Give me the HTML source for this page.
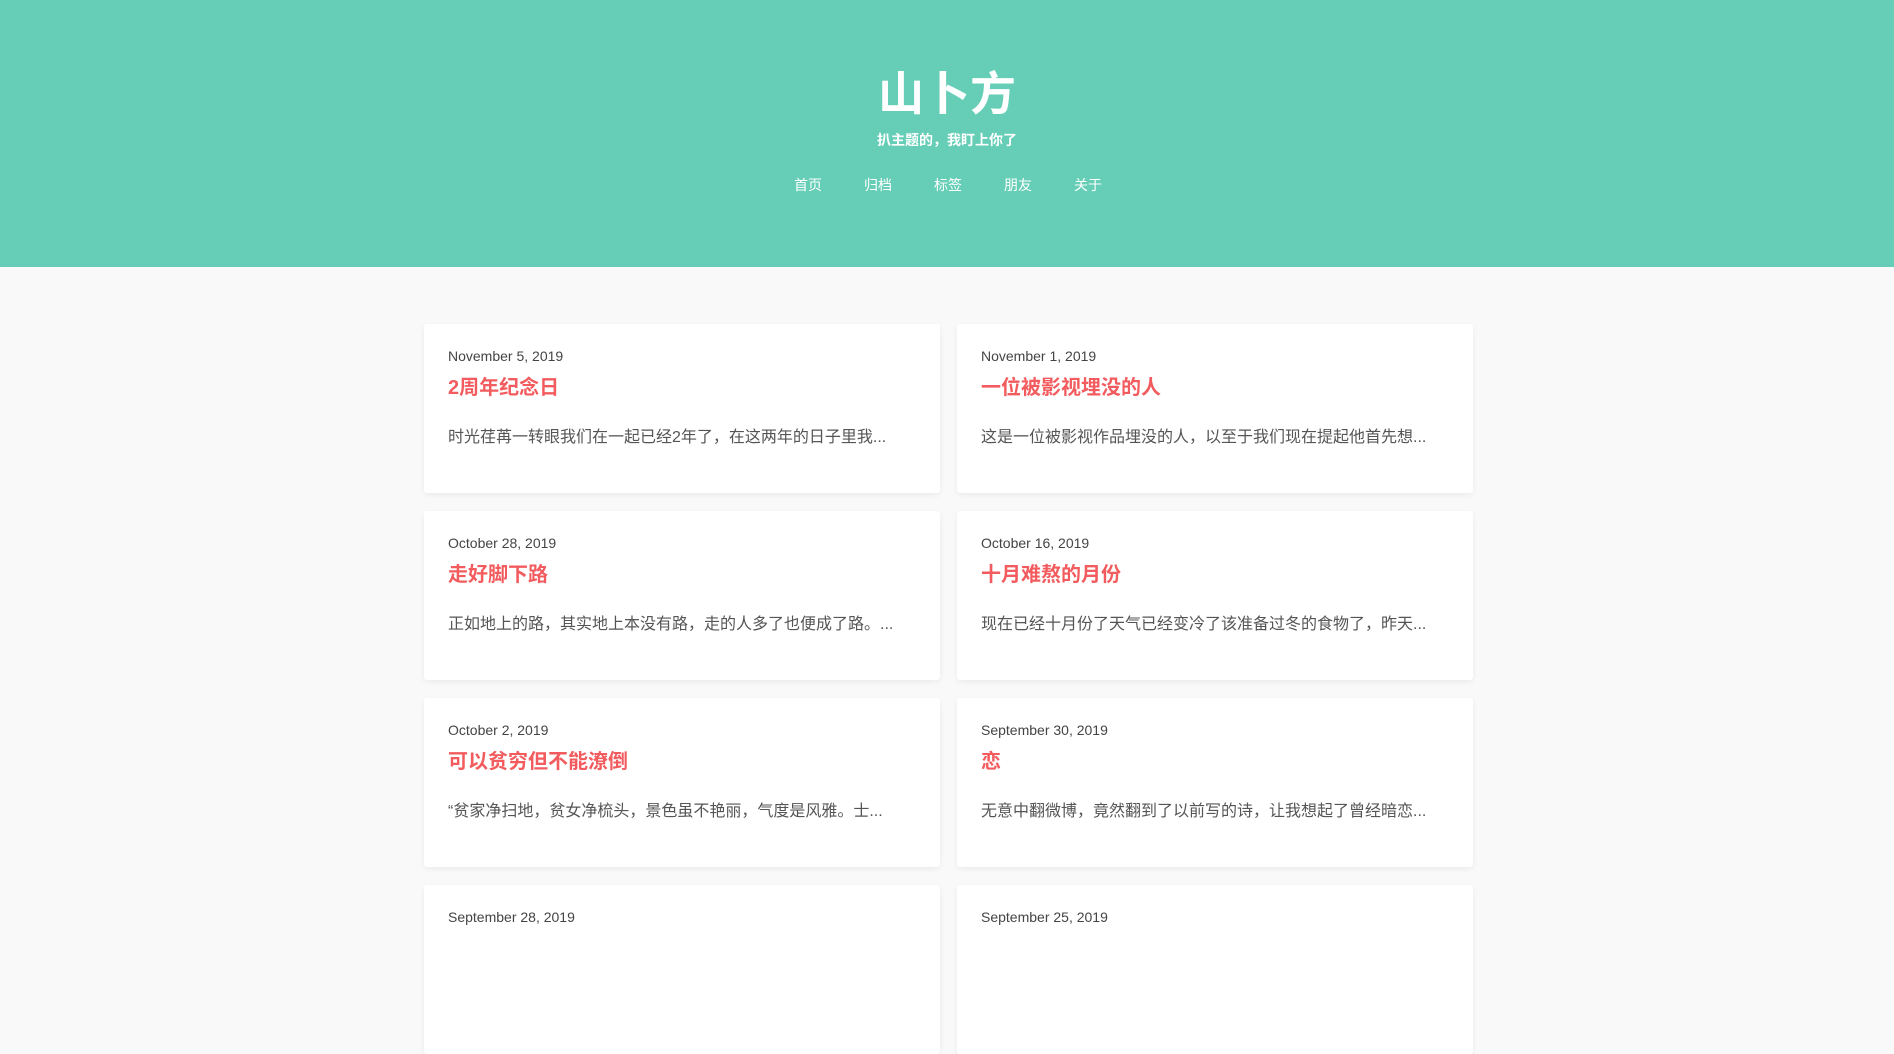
<!DOCTYPE html>
<html><head><meta charset="utf-8"><style>
*{margin:0;padding:0;box-sizing:border-box}
body{width:1894px;height:922px;overflow:hidden;background:#f9f9f9;font-family:"Liberation Sans","Noto Sans CJK SC",sans-serif}
.hd{height:267px;background:#66ceb6;color:#fff;text-align:center;position:relative}
.hd h1{position:absolute;top:66px;left:0;right:0;font-size:46px;font-weight:bold;line-height:56px}
.hd .sub{position:absolute;top:130px;left:0;right:0;font-size:14px;line-height:20px;font-weight:bold}
.nav{position:absolute;top:175px;left:0;right:0;font-size:14px;line-height:20px}
.nav span{position:absolute;transform:translateX(-50%)}
.card{position:absolute;width:516px;height:169px;background:#fff;box-shadow:0 2px 6px rgba(0,0,0,.06);border-radius:3px;padding:0 24px}
.d{position:absolute;top:24px;left:24px;font-size:14px;color:#444}
.t{position:absolute;top:47px;left:24px;font-size:20px;font-weight:bold;color:#f25c5f}
.e{position:absolute;top:99px;left:24px;right:24px;font-size:16px;color:#555;white-space:nowrap;overflow:hidden}
</style></head><body>
<div class="hd"><h1>山卜方</h1><div class="sub">扒主题的，我盯上你了</div>
<div class="nav"><span style="left:808px">首页</span><span style="left:878px">归档</span><span style="left:948px">标签</span><span style="left:1018px">朋友</span><span style="left:1088px">关于</span></div></div>
<div class="card" style="left:424px;top:324px"><div class="d">November 5, 2019</div><div class="t">2周年纪念日</div><div class="e">时光荏苒一转眼我们在一起已经2年了，在这两年的日子里我...</div></div>
<div class="card" style="left:957px;top:324px"><div class="d">November 1, 2019</div><div class="t">一位被影视埋没的人</div><div class="e">这是一位被影视作品埋没的人，以至于我们现在提起他首先想...</div></div>
<div class="card" style="left:424px;top:511px"><div class="d">October 28, 2019</div><div class="t">走好脚下路</div><div class="e">正如地上的路，其实地上本没有路，走的人多了也便成了路。...</div></div>
<div class="card" style="left:957px;top:511px"><div class="d">October 16, 2019</div><div class="t">十月难熬的月份</div><div class="e">现在已经十月份了天气已经变冷了该准备过冬的食物了，昨天...</div></div>
<div class="card" style="left:424px;top:698px"><div class="d">October 2, 2019</div><div class="t">可以贫穷但不能潦倒</div><div class="e">“贫家净扫地，贫女净梳头，景色虽不艳丽，气度是风雅。士...</div></div>
<div class="card" style="left:957px;top:698px"><div class="d">September 30, 2019</div><div class="t">恋</div><div class="e">无意中翻微博，竟然翻到了以前写的诗，让我想起了曾经暗恋...</div></div>
<div class="card" style="left:424px;top:885px"><div class="d">September 28, 2019</div></div>
<div class="card" style="left:957px;top:885px"><div class="d">September 25, 2019</div></div>
</body></html>
